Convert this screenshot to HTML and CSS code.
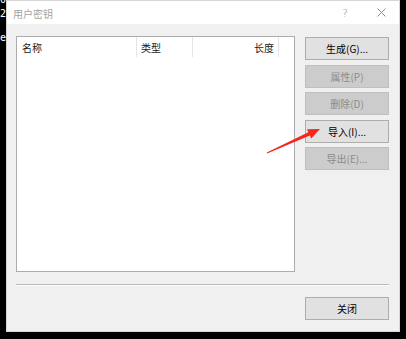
FILE: index.html
```html
<!DOCTYPE html>
<html lang="zh-CN">
<head>
    <meta charset="UTF-8">
    <meta name="viewport" content="width=device-width, initial-scale=1.0">
    <title>用户密钥</title>
    <link rel="stylesheet" href="styles.css">
</head>
<body>
<div class="screen">
    <div class="console">
        <p>0</p>
        <p>2</p>
        <p>&nbsp;</p>
        <p>e</p>
    </div>

    <div class="dialog">
        <div class="titlebar">
            <span class="title">用户密钥</span>
            <span class="caption-btn help">?</span>
            <span class="caption-btn">
                <svg width="9" height="9" viewBox="0 0 9 9">
                    <path d="M0.5 0.5 L8.5 8.5 M8.5 0.5 L0.5 8.5" stroke="#8a8a8a" stroke-width="1" fill="none"/>
                </svg>
            </span>
        </div>

        <div class="content">
            <div class="main">
                <div class="keylist">
                    <div class="list-head">
                        <div class="col col-name">名称</div>
                        <div class="col col-type">类型</div>
                        <div class="col col-len">长度</div>
                    </div>
                </div>
                <div class="actions">
                    <button class="btn">生成(G)...</button>
                    <button class="btn" disabled>属性(P)</button>
                    <button class="btn" disabled>删除(D)</button>
                    <button class="btn">导入(I)...</button>
                    <button class="btn" disabled>导出(E)...</button>
                </div>
            </div>
            <div class="separator"></div>
            <div class="footer">
                <button class="btn">关闭</button>
            </div>
        </div>
    </div>

    <!-- red arrow pointing at the import button -->
    <svg class="arrow" width="62" height="36" viewBox="0 0 62 36">
        <polygon points="5.2,31.5 47.8,13.5 49.2,16.5 58,7 45,7.3 46.4,10.3 4.8,30.5" fill="#f5261c"/>
    </svg>
</div>
</body>
</html>
```

FILE: styles.css
```css
*{
    box-sizing: border-box;
}
body{
    margin: 0;
    background-color: #000;
    font-family: "Noto Sans CJK SC", "Noto Sans", sans-serif;
    font-size: 10px;
}
.screen{
    position: relative;
    width: 406px;
    height: 339px;
    display: flex;
    overflow: hidden;
}
.console{
    width: 6px;
    overflow: hidden;
    color: #fff;
    font-family: "DejaVu Sans Mono", monospace;
    font-size: 10px;
    line-height: 12px;
}
.console p{
    margin: 0;
}
.console p:first-child{
    height: 6px;
    line-height: 0;
}
.console p:nth-child(2){
    margin-top: 2px;
}
.dialog{
    width: 394px;
    height: 332px;
    border: 1px solid #d6d6d6;
    background-color: #f0f0f0;
    display: flex;
    flex-direction: column;
}
.titlebar{
    height: 23px;
    background-color: #fff;
    display: flex;
    align-items: center;
    padding-left: 6px;
}
.title{
    flex: 1;
    color: #a3a3a3;
    font-size: 10px;
    padding-top: 2px;
}
.caption-btn{
    width: 36px;
    display: flex;
    justify-content: center;
    align-items: center;
}
.help{
    color: #8a8a8a;
    font-family: "DejaVu Sans", sans-serif;
    font-size: 11px;
    font-weight: 200;
    padding-top: 2px;
}
.content{
    flex: 1;
    padding: 12px 10px 11px 9px;
    display: flex;
    flex-direction: column;
}
.main{
    display: flex;
    gap: 10px;
}
.keylist{
    width: 279px;
    height: 236px;
    background-color: #fff;
    border: 1px solid #acacac;
}
.list-head{
    display: flex;
    height: 20px;
    color: #1a1a1a;
}
.col{
    display: flex;
    align-items: center;
    border-right: 1px solid #e5e5e5;
    padding-top: 1px;
}
.col-name{
    width: 120px;
    padding-left: 5px;
}
.col-type{
    width: 56px;
    padding-left: 4px;
}
.col-len{
    width: 86px;
    justify-content: flex-end;
    padding-right: 4px;
}
.actions{
    width: 84px;
    margin-top: 1px;
    display: flex;
    flex-direction: column;
    gap: 4.5px;
}
.btn{
    width: 84px;
    height: 23px;
    background-color: #e1e1e1;
    border: 1px solid #adadad;
    color: #000;
    font-family: "Noto Sans CJK SC", "Noto Sans", sans-serif;
    font-size: 10px;
    padding: 0;
}
.btn:disabled{
    background-color: #cccccc;
    border-color: #bfbfbf;
    color: #8b8b8b;
}
.separator{
    margin-top: 12px;
    height: 2px;
    border-top: 1px solid #b9b9b9;
    border-bottom: 1px solid #fff;
}
.footer{
    margin-top: 11px;
    display: flex;
    justify-content: flex-end;
}
.arrow{
    position: absolute;
    left: 262px;
    top: 122px;
}
```
